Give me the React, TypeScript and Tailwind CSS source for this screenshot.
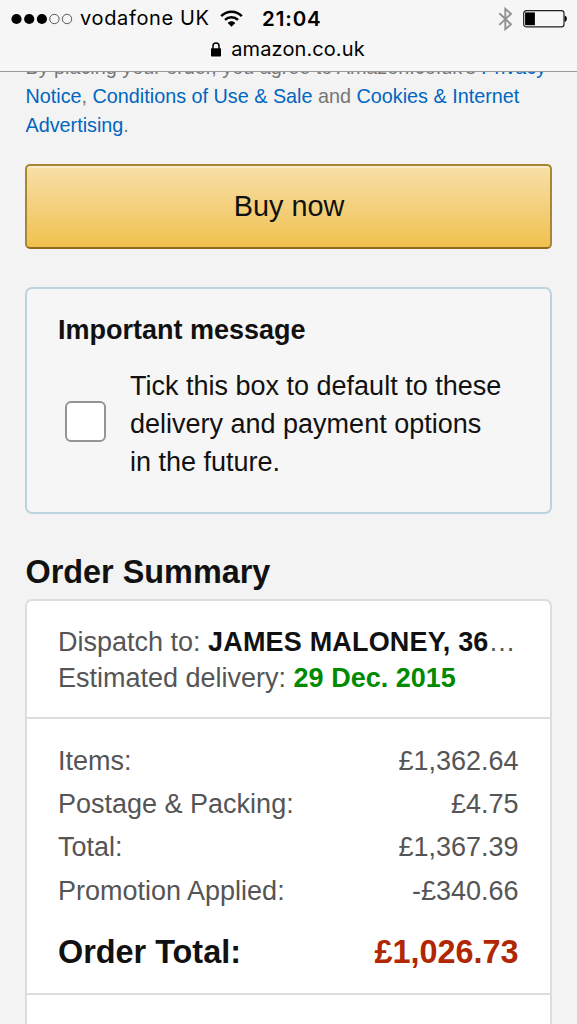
import type React from "react";

const costs = [
  { label: "Items:", value: "£1,362.64" },
  { label: "Postage & Packing:", value: "£4.75" },
  { label: "Total:", value: "£1,367.39" },
  { label: "Promotion Applied:", value: "-£340.66" },
];

const StatusBar: React.FC = () => (
  <header className="h-[72px] shrink-0 border-b border-[#9b9c9b] bg-[#f6f6f6] font-['Inter',sans-serif] text-black">
    <div className="flex h-[37px] items-center pl-[11px] pr-[9px]">
      <svg width="62" height="12" viewBox="0 0 62 12">
        {[5.5, 18.2, 30.9].map((cx) => (
          <circle key={cx} cx={cx} cy="6" r="5.1" />
        ))}
        {[43.4, 56].map((cx) => (
          <circle key={cx} cx={cx} cy="6" r="4.7" fill="none" stroke="#333" strokeWidth="0.8" />
        ))}
      </svg>
      <span className="ml-[7px] w-[130px] whitespace-nowrap text-[20px] leading-[37px] tracking-[0.65px]">
        vodafone UK
      </span>
      <svg className="ml-[10px]" width="23" height="17" viewBox="0 0 23 17" fill="none" stroke="#000" strokeWidth="2.5">
        <path d="M1.2 6.1C7 .2 16 .2 21.8 6.1" />
        <path d="M5 9.9C8.7 6.3 14.3 6.3 18 9.9" />
        <path d="M7.7 12.9C10 10.7 13 10.7 15.3 12.9L11.5 16.7Z" fill="#000" stroke="none" />
      </svg>
      <span className="ml-[19px] whitespace-nowrap text-[20.5px] font-semibold leading-[37px] tracking-[0.9px]">
        21:04
      </span>
      <svg className="ml-auto" width="15" height="24" viewBox="0 0 15 24" fill="none" stroke="#929292" strokeWidth="1.9">
        <path d="M1.3 6.2L13 17.3L7.3 22.2V1.8L13 6.8L1.3 17.9" />
      </svg>
      <svg className="ml-[10px]" width="45" height="18" viewBox="0 0 45 18">
        <rect x="0.7" y="0.7" width="40.3" height="16.2" rx="2.6" fill="none" stroke="#222" strokeWidth="1.2" />
        <rect x="2.1" y="2.4" width="9.8" height="12.8" />
        <path d="M41.6 5.6C44.6 6.1 44.6 11.5 41.6 12Z" />
      </svg>
    </div>
    <div className="flex h-[25px] items-center justify-center pr-px">
      <svg width="10" height="15" viewBox="0 0 10 15">
        <path d="M2 7V4.1C2 .1 8 .1 8 4.1V7" fill="none" stroke="#000" strokeWidth="1.5" />
        <rect y="6.2" width="10" height="8.4" rx="0.8" />
      </svg>
      <span className="ml-[10px] whitespace-nowrap text-[20px] leading-[25px] tracking-[0.1px]">
        amazon.co.uk
      </span>
    </div>
  </header>
);

const App: React.FC = () => {
  return (
    <div className="flex h-[1024px] w-[577px] flex-col overflow-hidden bg-[#f3f3f3] font-['Liberation_Sans',Arial,sans-serif] text-[27px] text-[#111]">
      <StatusBar />

      <main className="min-h-0 flex-1 overflow-hidden px-[25px]">
        {/* Legal text, scrolled partly beneath the bar */}
        <p className="-mt-[19px] whitespace-nowrap pl-[0.5px] text-[19.8px] leading-[29px] text-[#767676]">
          By placing your order, you agree to Amazon.co.uk's{" "}
          <a className="text-[#0066c0]">Privacy</a>
          <br />
          <a className="text-[#0066c0]">Notice</a>,{" "}
          <a className="text-[#0066c0]">Conditions of Use &amp; Sale</a> and{" "}
          <a className="text-[#0066c0]">Cookies &amp; Internet</a>
          <br />
          <a className="text-[#0066c0]">Advertising</a>.
        </p>

        <button className="mt-6 flex h-[85px] w-full items-center justify-center rounded-[5px] border-2 border-[#a88734] border-b-[#8d6b20] bg-linear-to-b from-[#f7dfa5] to-[#f0c14b] pl-px pt-px text-[28.8px] shadow-[inset_0_2px_0_rgba(255,255,255,0.4)]">
          Buy now
        </button>

        {/* Important message */}
        <section className="mt-[38px] h-[227px] w-[527px] rounded-[7px] border-2 border-[#bad3df] bg-[#f6f6f6] pl-[31px] pt-[22px]">
          <h2 className="font-bold leading-[38px]">Important message</h2>
          <label className="mt-[18px] flex items-center">
            <span className="ml-[7px] mt-[-6px] h-[41px] w-[41px] rounded-[6px] border-2 border-[#949494] bg-white" />
            <span className="ml-[24px] whitespace-nowrap leading-[38px]">
              Tick this box to default to these
              <br />
              delivery and payment options
              <br />
              in the future.
            </span>
          </label>
        </section>

        <h1 className="mt-[38px] pl-[0.5px] text-[32.4px] font-bold leading-[40px]">
          Order Summary
        </h1>

        {/* Order summary */}
        <section className="mt-[7px] h-[460px] w-[527px] rounded-[7px] border-2 border-[#ddd] bg-white">
          <div className="h-[118px] border-b-2 border-[#ddd] pl-[31px] pr-[31px] pt-[23px] leading-9 text-[#555]">
            <p className="whitespace-nowrap">
              Dispatch to:{" "}
              <b className="tracking-[0.17px] text-[#111]">JAMES MALONEY, 36</b>…
            </p>
            <p>
              Estimated delivery: <b className="text-[#008a00]">29 Dec. 2015</b>
            </p>
          </div>
          <div className="h-[276px] border-b-2 border-[#ddd] pl-[31px] pr-[31.5px] pt-[20.5px]">
            {costs.map((cost) => (
              <div key={cost.label} className="flex h-[43.3px] items-center justify-between text-[#555]">
                <span>{cost.label}</span>
                <span>{cost.value}</span>
              </div>
            ))}
            <div className="mt-[16.5px] flex h-[46px] items-center justify-between text-[32.4px] font-bold">
              <span>Order Total:</span>
              <span className="text-[#b12704]">£1,026.73</span>
            </div>
          </div>
        </section>
      </main>
    </div>
  );
};

export default App;
